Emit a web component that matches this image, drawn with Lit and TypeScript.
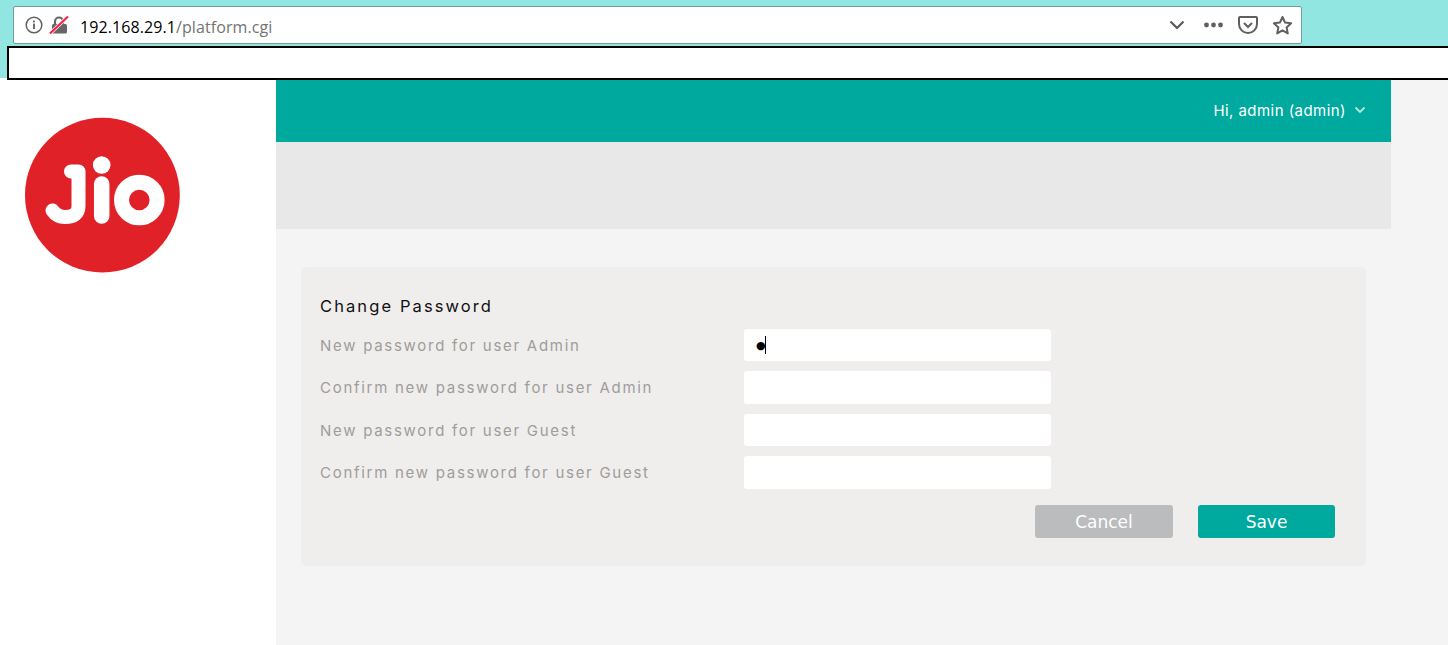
import { LitElement, html, css } from "lit";
import { customElement } from "lit/decorators.js";

const rows = [
  "New password for user Admin",
  "Confirm new password for user Admin",
  "New password for user Guest",
  "Confirm new password for user Guest",
];

@customElement("app-root")
export class AppRoot extends LitElement {
  static styles = css`
    :host { display: block; width: 1448px; height: 645px; overflow: hidden; background: #fff; font-family: "Inter", sans-serif; }
    .chrome { height: 78px; background: #92e6e2; box-sizing: border-box; padding: 6px 146px 0 13px; display: flex; flex-direction: column; }
    .url { height: 38px; flex: none; box-sizing: border-box; background: #fff; border: 1px solid #6f9f9e; border-radius: 2px; display: flex; align-items: center; padding: 0 8px 0 10px; }
    .url svg { display: block; flex: none; }
    .lock { margin-left: 5px; }
    .addr { font: 16px "Open Sans", sans-serif; letter-spacing: 0.09px; margin-left: 11px; padding-top: 3px; color: #000; flex: 1; }
    .addr span { color: #737373; }
    .tools { display: flex; align-items: center; gap: 14px; }
    .tools .chev { margin-right: 2.5px; }
    .blank { height: 34px; flex: none; box-sizing: border-box; margin: 2px -146px 0 -6px; background: #fff; border: 2px solid #000; border-right: 0; }
    .body { display: flex; height: 565px; margin-top: 2px; }
    .side { width: 276px; flex: none; padding: 37px 0 0 23px; box-sizing: border-box; }
    .side svg { display: block; }
    .main { flex: 1; background: #f4f4f4; }
    .col { width: 1115px; }
    .head { height: 62px; background: #00a99d; color: #fff; display: flex; align-items: center; justify-content: flex-end; padding: 0 25px 2px 0; box-sizing: border-box; font: 15px "Inter", sans-serif; letter-spacing: 0.45px; gap: 8px; }
    .band { height: 87px; background: #e8e8e8; }
    .card { margin: 38px 25px 0; height: 299px; box-sizing: border-box; background: #efeeed; border-radius: 5px; padding: 29px 31px 0 19px; }
    h2 { margin: 0 0 11.75px; font: 400 16.5px/21px "Inter", sans-serif; letter-spacing: 2.1px; color: #111; }
    .rows { display: grid; grid-template-columns: 424px 307px; grid-auto-rows: 32.5px; row-gap: 10px; align-items: center; }
    label { font: 15px "Inter", sans-serif; letter-spacing: 1.72px; color: #a09c9b; white-space: nowrap; }
    .field { height: 100%; box-sizing: border-box; background: #fff; border: 0; border-radius: 3px; padding: 0 12px; margin: 0; width: 100%; display: flex; align-items: center; font: 11px "DejaVu Sans", sans-serif; color: #000; outline: none; }
    .caret { width: 1px; height: 18px; background: #000; margin-left: -1px; }
    .actions { display: flex; justify-content: flex-end; gap: 25px; margin-top: 16.25px; }
    button { width: 138px; height: 33px; border: 0; border-radius: 3px; color: #fff; font: 17px "DejaVu Sans", sans-serif; padding: 0; }
    .cancel { background: #bbbcbe; }
    .save { background: #00a99d; width: 137px; }
  `;

  render() {
    return html`
      <div class="chrome">
        <div class="url">
          <svg width="20" height="20" viewBox="0 0 20 20" fill="none">
            <circle cx="10" cy="10" r="7.800" stroke="#5f5f5f" stroke-width="1.500"/>
            <rect x="9.100" y="8.600" width="1.800" height="5.400" fill="#5f5f5f"/>
            <rect x="9.100" y="5.600" width="1.800" height="1.800" fill="#5f5f5f"/>
          </svg>
          <svg class="lock" width="20" height="20" viewBox="0 0 20 20" fill="none">
            <path d="M6 10V6.500a4 4 0 0 1 8 0V10" stroke="#666" stroke-width="2.200"/>
            <rect x="3" y="9" width="15" height="9.500" rx="1.500" fill="#666"/>
            <path d="M1 18.500 19 1.500" stroke="#fff" stroke-width="3.600"/>
            <path d="M1 18.500 19 1.500" stroke="#f5224b" stroke-width="2.200"/>
          </svg>
          <div class="addr">192.168.29.1<span>/platform.cgi</span></div>
          <div class="tools">
            <svg class="chev" width="20" height="20" viewBox="0 0 20 20" fill="none"><path d="M3.500 6.500 10 13l6.500-6.500" stroke="#5a5a5a" stroke-width="2.200"/></svg>
            <svg width="21" height="20" viewBox="0 0 21 20" fill="#5f5f5f"><circle cx="3.500" cy="10" r="2.400"/><circle cx="10.500" cy="10" r="2.400"/><circle cx="17.500" cy="10" r="2.400"/></svg>
            <svg width="20" height="20" viewBox="0 0 20 20" fill="none"><path d="M2 2h16a1 1 0 0 1 1 1V9a9 9 0 0 1-18 0V3A1 1 0 0 1 2 2z" stroke="#5f5f5f" stroke-width="2"/><path d="M6 8l4 4 4-4" stroke="#5f5f5f" stroke-width="2"/></svg>
            <svg width="21" height="21" viewBox="0 0 21 21" fill="none"><path d="M10.500 2l2.600 5.600 6 .7-4.500 4.100 1.200 6-5.300-3-5.300 3 1.200-6L1.900 8.300l6-.7z" stroke="#5f5f5f" stroke-width="2" stroke-linejoin="round"/></svg>
          </div>
        </div>
        <div class="blank"></div>
      </div>
      <div class="body">
        <div class="side">
          <svg width="160" height="160" viewBox="23 117 160 160" fill="none" role="img" aria-label="Jio">
            <circle cx="102.400" cy="195.200" r="77.400" fill="#e12128"/>
            <path d="M71 171.500H78.500V206Q78.500 217 65 217Q57 217 52.500 210.500" stroke="#fff" stroke-width="14" stroke-linecap="round" stroke-linejoin="round"/>
            <path d="M101.700 184V216" stroke="#fff" stroke-width="15.500" stroke-linecap="round"/>
            <circle cx="101.700" cy="165" r="8.800" fill="#fff"/>
            <circle cx="139.300" cy="200" r="17.800" stroke="#fff" stroke-width="15"/>
          </svg>
        </div>
        <div class="main">
          <div class="col">
            <div class="head">
              <span>Hi, admin (admin)</span>
              <svg width="12" height="8" viewBox="0 0 12 8" fill="none"><path d="M1.500 1.500 6 6l4.500-4.500" stroke="#b5e6e1" stroke-width="1.800"/></svg>
            </div>
            <div class="band"></div>
            <div class="card">
              <h2>Change Password</h2>
              <div class="rows">
                ${rows.map((r, i) => html`
                  <label>${r}</label>
                  ${i === 0
                    ? html`<div class="field">●<span class="caret"></span></div>`
                    : html`<input class="field" type="password" aria-label=${r} />`}
                `)}
              </div>
              <div class="actions">
                <button class="cancel">Cancel</button>
                <button class="save">Save</button>
              </div>
            </div>
          </div>
        </div>
      </div>
    `;
  }
}
